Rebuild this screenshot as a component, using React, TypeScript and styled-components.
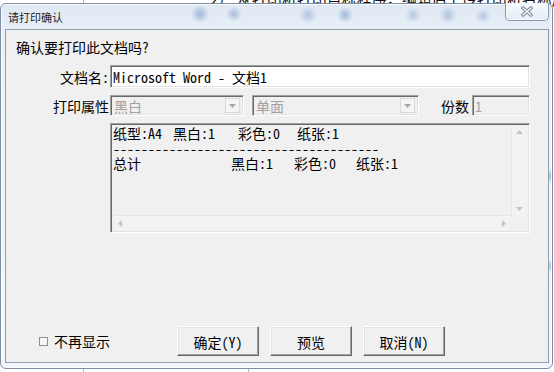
import React from "react";
import styled, { createGlobalStyle } from "styled-components";

const MONO = `"Noto Sans Mono CJK SC", "Liberation Mono", "Noto Sans CJK SC", monospace`;

const GlobalStyle = createGlobalStyle`
  html, body {
    margin: 0;
    padding: 0;
    background: #fff;
  }
  body {
    font-family: ${MONO};
    font-size: 14px;
    color: #000;
  }
  * {
    box-sizing: border-box;
  }
`;

const Desktop = styled.div`
  position: relative;
  width: 554px;
  height: 372px;
  overflow: hidden;
  background: #fff;
  padding-top: 3px;
`;

// the document lying behind the dialog
const DocText = styled.div`
  position: absolute;
  left: 210px;
  top: -12px;
  font-family: "Noto Sans CJK SC", sans-serif;
  font-size: 15px;
  color: #111;
  white-space: nowrap;
`;

const DocRule = styled.div<{ $x: number }>`
  position: absolute;
  top: 0;
  bottom: 0;
  left: ${(p) => p.$x}px;
  width: 1px;
  background: #b8b8b8;
`;

const Window = styled.div`
  position: relative;
  z-index: 1;
  width: 553px;
  height: 366px;
  border: 1px solid #7d8da2;
  border-radius: 6px;
  padding: 0 3px 5px 4px;
  display: flex;
  flex-direction: column;
  box-shadow: inset 0 0 0 1px rgba(255, 255, 255, 0.85);
  background:
    radial-gradient(circle at 199px 10px, rgba(80, 120, 180, 0.45), transparent 9px),
    radial-gradient(circle at 233px 10px, rgba(80, 120, 180, 0.4), transparent 8px),
    radial-gradient(circle at 307px 11px, rgba(80, 120, 180, 0.35), transparent 9px),
    radial-gradient(circle at 344px 11px, rgba(80, 120, 180, 0.45), transparent 8px),
    radial-gradient(circle at 412px 11px, rgba(80, 120, 180, 0.3), transparent 8px),
    radial-gradient(circle at 447px 11px, rgba(80, 120, 180, 0.35), transparent 9px),
    radial-gradient(circle at 482px 12px, rgba(80, 120, 180, 0.3), transparent 8px),
    radial-gradient(circle at 550px 172px, rgba(70, 120, 200, 0.5), transparent 7px),
    radial-gradient(circle at 550px 262px, rgba(70, 120, 200, 0.4), transparent 7px),
    linear-gradient(#dfe8f3, #e8eff7 26px, #eef4fa 120px, #f3f7fb);
`;

const TitleBar = styled.div`
  height: 25px;
  display: flex;
  align-items: center;
  padding-left: 3px;
`;

const Title = styled.span`
  font-family: "Noto Sans CJK SC", sans-serif;
  font-size: 11px;
  color: #1b2430;
`;

const CloseButton = styled.div`
  margin-left: auto;
  align-self: flex-start;
  margin-top: -1px;
  width: 44px;
  height: 18px;
  border: 1px solid #8697ad;
  border-top: none;
  border-radius: 0 0 5px 5px;
  background: linear-gradient(rgba(255, 255, 255, 0.75), rgba(230, 238, 247, 0.6));
  box-shadow: inset 0 0 0 1px rgba(255, 255, 255, 0.7);
  display: flex;
  align-items: center;
  justify-content: center;
`;

const Client = styled.div`
  flex: 1;
  background: #f0f0f0;
  border: 1px solid #8f9eb1;
  display: flex;
  flex-direction: column;
  padding: 8px 0 6px 0;
`;

const Prompt = styled.div`
  padding-left: 10px;
  line-height: 18px;
  height: 18px;
`;

const Form = styled.div`
  margin-top: 9px;
  display: grid;
  grid-template-columns: 104px 420px;
  grid-template-rows: 23px 21px 110px;
  row-gap: 7px;
  align-items: center;
`;

const Label = styled.div`
  text-align: right;
  padding-right: 1px;
  white-space: nowrap;
  align-self: center;
`;

const sunken = `
  border-top: 1px solid #a0a0a0;
  border-left: 1px solid #a0a0a0;
  border-bottom: 1px solid #ffffff;
  border-right: 1px solid #ffffff;
  box-shadow: inset 1px 1px 0 #696969, inset -1px -1px 0 #e3e3e3;
`;

const raised = `
  border-top: 1px solid #ffffff;
  border-left: 1px solid #ffffff;
  border-bottom: 1px solid #696969;
  border-right: 1px solid #696969;
  box-shadow: inset -1px -1px 0 #a0a0a0, inset 1px 1px 0 #e3e3e3;
`;

const TextField = styled.div<{ $disabled?: boolean; $width?: number }>`
  ${sunken}
  height: 100%;
  width: ${(p) => (p.$width ? `${p.$width}px` : "100%")};
  background: ${(p) => (p.$disabled ? "#f0f0f0" : "#ffffff")};
  color: ${(p) => (p.$disabled ? "#a0a0a0" : "#000")};
  padding: 0 2px;
  display: flex;
  align-items: center;
  white-space: pre;
`;

const OptionsRow = styled.div`
  display: flex;
  align-items: center;
  height: 21px;
`;

const Combo = styled.div<{ $width: number; $gap?: number }>`
  ${sunken}
  width: ${(p) => p.$width}px;
  height: 21px;
  margin-left: ${(p) => p.$gap ?? 0}px;
  background: #f0f0f0;
  color: #a0a0a0;
  display: flex;
  align-items: center;
  padding: 0 2px 0 3px;
`;

const ComboText = styled.span`
  flex: 1;
`;

const ComboArrow = styled.div`
  width: 15px;
  height: 15px;
  border: 1px solid #d9d9d9;
  background: #f4f4f4;
  display: flex;
  align-items: center;
  justify-content: center;
  margin-right: 1px;
`;

const CopiesLabel = styled.span`
  margin-left: auto;
  margin-right: 3px;
`;

const ListBox = styled.div`
  ${sunken}
  height: 110px;
  background: #f0f0f0;
  display: grid;
  grid-template-columns: 1fr 16px;
  grid-template-rows: 1fr 15px;
  padding: 2px;
`;

const ListBody = styled.div`
  line-height: 15px;
`;

const ListLine = styled.div`
  display: flex;
  height: 15px;
  white-space: pre;
`;

const Cell = styled.span<{ $w?: number }>`
  flex: none;
  width: ${(p) => (p.$w ? `${p.$w}px` : "auto")};
`;

const VScroll = styled.div`
  border-left: 1px solid #e6e6e6;
  background: #f2f2f2;
  display: flex;
  flex-direction: column;
  justify-content: space-between;
  align-items: center;
  padding: 4px 0 4px;
`;

const HScroll = styled.div`
  border-top: 1px solid #e6e6e6;
  background: #f2f2f2;
  display: flex;
  justify-content: space-between;
  align-items: center;
  padding: 0 5px;
`;

const Corner = styled.div`
  background: #f0f0f0;
`;

const Spacer = styled.div`
  flex: 1;
`;

const Footer = styled.div`
  height: 30px;
  display: flex;
  align-items: center;
  padding-left: 33px;
`;

const CheckBox = styled.div`
  width: 9px;
  height: 9px;
  border: 1px solid #8e8f8f;
  background: #f6f6f6;
`;

const CheckLabel = styled.span`
  margin-left: 6px;
  width: 56px;
`;

const Buttons = styled.div`
  margin-left: 67px;
  display: flex;
  gap: 11px;
`;

const Button = styled.div`
  ${raised}
  width: 82px;
  height: 30px;
  background: #f0f0f0;
  display: flex;
  align-items: center;
  justify-content: center;
  padding-top: 1px;
`;

type Dir = "up" | "down" | "left" | "right";

function Arrow({ dir, color = "#c4c4c4" }: { dir: Dir; color?: string }) {
  const pts: Record<Dir, string> = {
    up: "0,4 3.5,0 7,4",
    down: "0,0 3.5,4 7,0",
    left: "4,0 0,3.5 4,7",
    right: "0,0 4,3.5 0,7",
  };
  const horiz = dir === "left" || dir === "right";
  return (
    <svg width={horiz ? 4 : 7} height={horiz ? 7 : 4} viewBox={horiz ? "0 0 4 7" : "0 0 7 4"}>
      <polygon points={pts[dir]} fill={color} />
    </svg>
  );
}

function CloseGlyph() {
  const d = "M2 2 L10 9 M10 2 L2 9";
  return (
    <svg width="12" height="11" viewBox="0 0 12 11">
      <path d={d} stroke="#6c7a8c" strokeWidth="3.4" strokeLinecap="round" fill="none" />
      <path d={d} stroke="#ffffff" strokeWidth="1.6" strokeLinecap="round" fill="none" />
    </svg>
  );
}

// [text, width of the cell] per column of the summary list
const summary: [string, number?][][] = [
  [["纸型:A4", 60], ["黑白:1", 65], ["彩色:0", 59], ["纸张:1"]],
  [["--------------------------------------"]],
  [["总计", 118], ["黑白:1", 63], ["彩色:0", 62], ["纸张:1"]],
];

export default function App() {
  return (
    <>
      <GlobalStyle />
      <Desktop>
        <DocText>2） 从打印机打印目标程序，编辑后上传打印机名称后，实现打印，如</DocText>
        <DocRule $x={83} />
        <DocRule $x={248} />
        <Window>
          <TitleBar>
            <Title>请打印确认</Title>
            <CloseButton>
              <CloseGlyph />
            </CloseButton>
          </TitleBar>
          <Client>
            <Prompt>确认要打印此文档吗?</Prompt>
            <Form>
              <Label>文档名:</Label>
              <TextField>Microsoft Word - 文档1</TextField>

              <Label>打印属性</Label>
              <OptionsRow>
                <Combo $width={134}>
                  <ComboText>黑白</ComboText>
                  <ComboArrow>
                    <Arrow dir="down" color="#a8a8a8" />
                  </ComboArrow>
                </Combo>
                <Combo $width={167} $gap={8}>
                  <ComboText>单面</ComboText>
                  <ComboArrow>
                    <Arrow dir="down" color="#a8a8a8" />
                  </ComboArrow>
                </Combo>
                <CopiesLabel>份数</CopiesLabel>
                <TextField $disabled $width={58}>1</TextField>
              </OptionsRow>

              <div />
              <ListBox>
                <ListBody>
                  {summary.map((line, i) => (
                    <ListLine key={i}>
                      {line.map(([text, w], j) => (
                        <Cell key={j} $w={w}>
                          {text}
                        </Cell>
                      ))}
                    </ListLine>
                  ))}
                </ListBody>
                <VScroll>
                  <Arrow dir="up" />
                  <Arrow dir="down" />
                </VScroll>
                <HScroll>
                  <Arrow dir="left" />
                  <Arrow dir="right" />
                </HScroll>
                <Corner />
              </ListBox>
            </Form>
            <Spacer />
            <Footer>
              <CheckBox />
              <CheckLabel>不再显示</CheckLabel>
              <Buttons>
                <Button>确定(Y)</Button>
                <Button>预览</Button>
                <Button>取消(N)</Button>
              </Buttons>
            </Footer>
          </Client>
        </Window>
      </Desktop>
    </>
  );
}
